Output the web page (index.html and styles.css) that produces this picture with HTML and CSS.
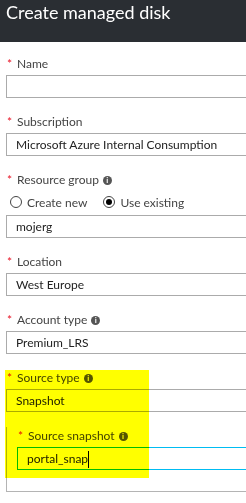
FILE: index.html
```html
<!DOCTYPE html>
<html>
<head>
  <title>Create managed disk</title>
  <link rel="stylesheet" href="styles.css">
</head>
<body>
  <header class="blade-header">
    <h1>Create managed disk</h1>
  </header>
  <main class="blade-form">
    <div class="field">
      <div class="field-label"><span class="req">*</span>Name</div>
      <div class="textbox"></div>
    </div>

    <div class="field">
      <div class="field-label"><span class="req">*</span>Subscription</div>
      <div class="textbox">Microsoft Azure Internal Consumption</div>
    </div>

    <div class="field">
      <div class="field-label"><span class="req">*</span>Resource group<span class="info">i</span></div>
      <div class="radio-row">
        <span class="radio"></span><span class="radio-text">Create new</span>
        <span class="radio checked"></span><span class="radio-text">Use existing</span>
      </div>
      <div class="textbox">mojerg</div>
    </div>

    <div class="field">
      <div class="field-label"><span class="req">*</span>Location</div>
      <div class="textbox">West Europe</div>
    </div>

    <div class="field">
      <div class="field-label"><span class="req">*</span>Account type<span class="info">i</span></div>
      <div class="textbox">Premium_LRS</div>
    </div>

    <div class="field">
      <div class="field-label"><span class="req">*</span>Source type<span class="info">i</span></div>
      <div class="textbox">Snapshot</div>
    </div>

    <!-- nested block for the chosen source -->
    <div class="sub-section">
      <div class="field-label"><span class="req">*</span>Source snapshot<span class="info">i</span></div>
      <div class="textbox focused">portal_snap<span class="caret"></span></div>
    </div>

    <div class="highlight"></div>
  </main>
</body>
</html>
```

FILE: styles.css
```css
body {
  margin: 0;
  font-family: Lato, "Liberation Sans", sans-serif;
  background-color: #fff;
  overflow: hidden;
}
.blade-header {
  background-color: #2a2e33;
  height: 42px;
  padding: 0 6px;
}
.blade-header h1 {
  margin: 0;
  font-size: 18px;
  font-weight: 400;
  line-height: 24px;
  color: #fff;
  white-space: nowrap;
}
.blade-form {
  position: relative;
  padding: 13px 0 0 6px;
}
.field {
  margin-bottom: 15px;
}
.field-label {
  display: flex;
  align-items: center;
  height: 18px;
  line-height: 18px;
  margin-bottom: 2px;
  font-size: 12px;
  color: #444;
  white-space: nowrap;
}
.req {
  color: #e81123;
  width: 10px;
  margin-left: 1px;
}
.info {
  display: inline-flex;
  align-items: center;
  justify-content: center;
  width: 9px;
  height: 9px;
  margin-left: 4px;
  border-radius: 50%;
  background-color: #555;
  color: #fff;
  font-size: 8px;
  font-weight: 700;
  line-height: 9px;
}
.textbox {
  height: 21px;
  line-height: 21px;
  padding: 0 9px;
  border: 1px solid #ababab;
  border-right: none;
  font-size: 12px;
  color: #222;
  white-space: nowrap;
  overflow: hidden;
}
.textbox.focused {
  border-color: #00bcf2;
}
.caret {
  display: inline-block;
  width: 1px;
  height: 17px;
  background-color: #000;
  vertical-align: middle;
}
.radio-row {
  display: flex;
  align-items: center;
  height: 22px;
  margin-bottom: 2px;
  padding-left: 4px;
  font-size: 12px;
  color: #444;
}
.radio {
  position: relative;
  width: 10px;
  height: 10px;
  border: 1px solid #444;
  border-radius: 50%;
  margin-right: 5px;
}
.radio.checked::after {
  content: "";
  position: absolute;
  left: 2px;
  top: 2px;
  width: 6px;
  height: 6px;
  border-radius: 50%;
  background-color: #000;
}
.radio-text {
  margin-right: 16px;
}
.sub-section {
  padding: 0 0 21px 10px;
  border-left: 1px solid #b4b4b4;
  border-bottom: 1px solid #b4b4b4;
}
.highlight {
  position: absolute;
  left: 5px;
  top: 328px;
  width: 144px;
  height: 108px;
  background-color: #ffff00;
  mix-blend-mode: multiply;
}
```
